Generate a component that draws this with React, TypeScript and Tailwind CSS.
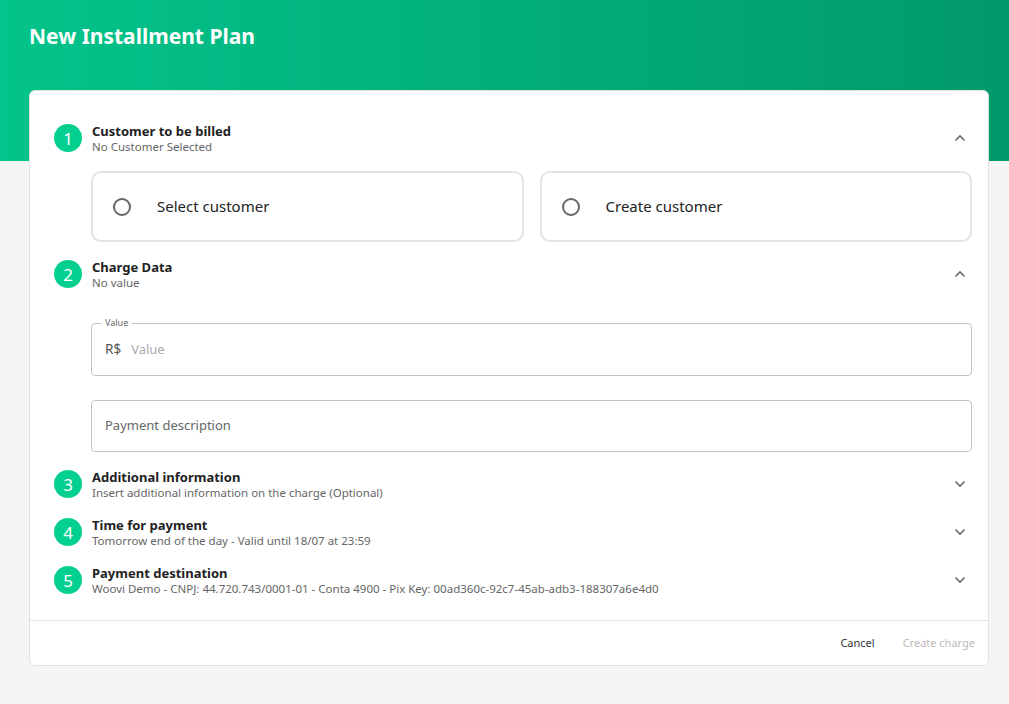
import React from "react";

const font = { fontFamily: '"Noto Sans", "Open Sans", sans-serif' };

function Chevron({ up }: { up?: boolean }) {
  return (
    <svg width="12" height="8" viewBox="0 0 12 8" className="text-[#6b6b6b]">
      {up ? (
        <path d="M1.5 6.5 L6 2 L10.5 6.5" fill="none" stroke="currentColor" strokeWidth="1.6" />
      ) : (
        <path d="M1.5 1.5 L6 6 L10.5 1.5" fill="none" stroke="currentColor" strokeWidth="1.6" />
      )}
    </svg>
  );
}

function StepHeader({ n, title, sub, up }: { n: number; title: string; sub: string; up?: boolean }) {
  return (
    <div className="flex items-center h-[32px]">
      <div className="w-[28px] h-[28px] rounded-full bg-[#03d08e] text-white flex items-center justify-center text-[17px] leading-none">
        {n}
      </div>
      <div className="ml-[10px] flex-1 flex flex-col">
        <div className="text-[13px] font-bold text-[#222] leading-[16px]">{title}</div>
        <div className="text-[11.5px] text-[#666] leading-[15px]">{sub}</div>
      </div>
      <div className="w-[24px] flex items-center justify-center">
        <Chevron up={up} />
      </div>
    </div>
  );
}

function Option({ label }: { label: string }) {
  return (
    <div className="flex-1 h-[71px] border-2 border-[#e3e3e3] rounded-[10px] flex items-center pl-[20px]">
      <div className="w-[18px] h-[18px] rounded-full border-2 border-[#666]" />
      <div className="ml-[26px] text-[15px] text-[#222]">{label}</div>
    </div>
  );
}

export default function App() {
  return (
    <div style={font} className="min-h-[704px] bg-[#f5f5f5] relative">
      <div className="h-[161px] bg-gradient-to-r from-[#03c48a] to-[#01996c] px-[29px] pt-[22px]">
        <h1 className="text-white text-[21px] font-bold leading-[28px]">New Installment Plan</h1>
      </div>
      <div className="ml-[29px] mr-[20px] -mt-[71px] bg-white rounded-[6px] border border-[#e2e2e2] relative">
        <div className="pl-[24px] pr-[16px] pt-[31px] pb-[24px]">
          <StepHeader n={1} title="Customer to be billed" sub="No Customer Selected" up />
          <div className="flex gap-[16px] pl-[37px] mt-[17px]">
            <Option label="Select customer" />
            <Option label="Create customer" />
          </div>
          <div className="mt-[16px]">
            <StepHeader n={2} title="Charge Data" sub="No value" up />
          </div>
          <div className="pl-[37px] mt-[33px]">
            <div className="relative h-[53px] border border-[#c4c4c4] rounded-[4px] flex items-center px-[13px]">
              <span className="absolute -top-[8px] left-[9px] bg-white px-[4px] text-[9px] text-[#666] leading-[14px]">
                Value
              </span>
              <span className="text-[13.5px] text-[#555]">R$</span>
              <span className="ml-[10px] text-[13px] text-[#aaa]">Value</span>
            </div>
            <div className="mt-[24px] h-[52px] border border-[#c4c4c4] rounded-[4px] flex items-center px-[13px]">
              <span className="text-[13px] text-[#666]">Payment description</span>
            </div>
          </div>
          <div className="mt-[16px] flex flex-col gap-[16px]">
            <StepHeader n={3} title="Additional information" sub="Insert additional information on the charge (Optional)" />
            <StepHeader n={4} title="Time for payment" sub="Tomorrow end of the day - Valid until 18/07 at 23:59" />
            <StepHeader n={5} title="Payment destination" sub="Woovi Demo - CNPJ: 44.720.743/0001-01 - Conta 4900 - Pix Key: 00ad360c-92c7-45ab-adb3-188307a6e4d0" />
          </div>
        </div>
        <div className="border-t border-[#e2e2e2] h-[45px] flex items-center justify-end pr-[13px] gap-[28px]">
          <span className="text-[11px] text-[#333]">Cancel</span>
          <span className="text-[11px] text-[#bbb]">Create charge</span>
        </div>
      </div>
    </div>
  );
}
